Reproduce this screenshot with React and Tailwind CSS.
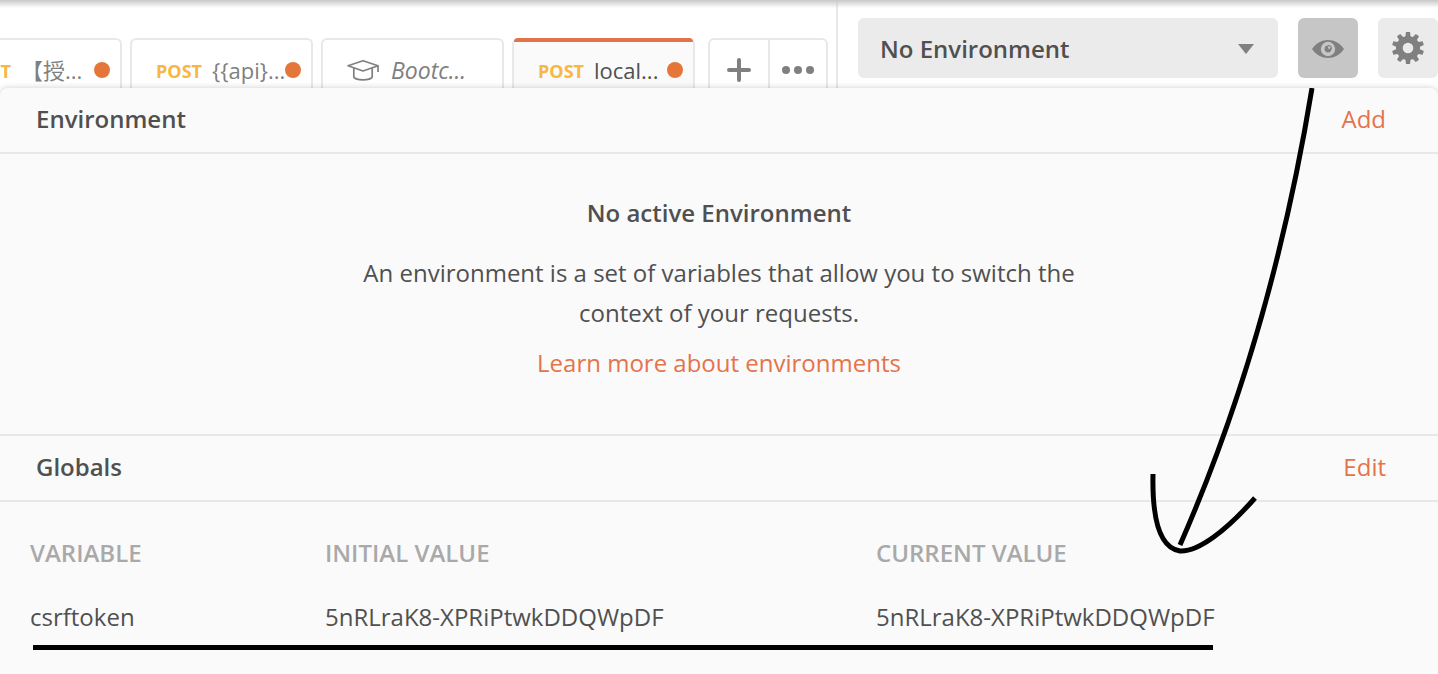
const tabs = [
  { method: 'POST', title: '【授...', dirty: true },
  { method: 'POST', title: '{{api}...', dirty: true },
  { title: 'Bootc...', lesson: true },
  { method: 'POST', title: 'local...', dirty: true, active: true },
];

const variables = [
  {
    name: 'csrftoken',
    initial: '5nRLraK8-XPRiPtwkDDQWpDF',
    current: '5nRLraK8-XPRiPtwkDDQWpDF',
  },
];

function LessonIcon() {
  return (
    <svg
      className="h-6 w-8 shrink-0"
      viewBox="0 0 32 24"
      fill="none"
      stroke="#808080"
      strokeWidth="1.7"
      strokeLinejoin="round"
      aria-hidden="true"
    >
      <path d="M1 7.7 L16 2.7 L31 7.7 L16 13 Z" />
      <path d="M6.8 9.8 V19 C9 22.7 23 22.7 25.2 19 V9.8" />
      <path d="M31 7.7 V14" />
    </svg>
  );
}

function EyeIcon() {
  return (
    <svg className="h-8 w-8" viewBox="0 0 32 32" aria-hidden="true">
      <path d="M0 17 C8 5 24 5 32 17 C24 29 8 29 0 17 Z" fill="#808080" />
      <circle cx="16" cy="17" r="7.2" fill="#c6c6c6" />
      <circle cx="16" cy="17" r="3.4" fill="#808080" />
      <path d="M16 17 V13 A4 4 0 0 1 20 17 Z" fill="#808080" />
      <circle cx="17.2" cy="15.6" r="1.3" fill="#c6c6c6" />
    </svg>
  );
}

function GearIcon() {
  const teeth = [0, 36, 72, 108, 144, 180, 216, 252, 288, 324];
  return (
    <svg className="h-8 w-8" viewBox="0 0 32 32" fill="#808080" aria-hidden="true">
      {teeth.map((angle) => (
        <path key={angle} d="M13.2 6 L14 0 H18 L18.8 6 Z" transform={`rotate(${angle} 16 16)`} />
      ))}
      <path
        fillRule="evenodd"
        d="M16 4 A12 12 0 1 1 16 28 A12 12 0 1 1 16 4 Z M16 10.7 A5.3 5.3 0 1 0 16 21.3 A5.3 5.3 0 1 0 16 10.7 Z"
      />
    </svg>
  );
}

function Tab({ tab }) {
  return (
    <button
      type="button"
      className={`relative flex h-[50px] w-[183px] shrink-0 items-center rounded-t-md border-x-2 border-t-2 border-[#e8e8e8] pl-6 text-left ${
        tab.lesson ? 'pt-3' : 'pt-3.5'
      } ${tab.active ? 'bg-[#fafafa] text-[#505050]' : 'bg-white text-[#808080]'}`}
    >
      {tab.active && <span className="absolute inset-x-0 -top-0.5 h-1 rounded-t-sm bg-[#e0734a]" />}
      {tab.lesson ? (
        <LessonIcon />
      ) : (
        <span className="text-lg font-bold text-[#f7b740]">{tab.method}</span>
      )}
      <span className={`whitespace-nowrap ${tab.lesson ? 'ml-3 text-[23px] italic' : 'ml-2.5 text-[22px]'}`}>
        {tab.title}
      </span>
      {tab.dirty && <span className="absolute top-[22px] right-2.5 size-4 rounded-full bg-[#e57639]" />}
    </button>
  );
}

function TopBar() {
  return (
    <header className="relative flex h-[88px] bg-white">
      <div className="absolute inset-x-0 top-0 h-2 bg-linear-to-b from-[#c8c8c8] to-transparent" />
      <nav className="flex min-w-0 flex-1 items-end justify-end gap-[13px] overflow-hidden pr-2">
        <div className="flex gap-2">
          {tabs.map((tab) => (
            <Tab key={tab.title} tab={tab} />
          ))}
        </div>
        <div className="flex h-[50px] w-[120px] shrink-0 rounded-t-md border-x-2 border-t-2 border-[#e8e8e8]">
          <button type="button" aria-label="New tab" className="flex w-[60px] items-center justify-center border-r-2 border-[#e8e8e8] pt-3">
            <svg className="size-6" viewBox="0 0 24 24" stroke="#808080" strokeWidth="4" strokeLinecap="round" aria-hidden="true">
              <path d="M12 2 V22 M2 12 H22" />
            </svg>
          </button>
          <button type="button" aria-label="Tab options" className="flex flex-1 items-center justify-center pt-3">
            <svg className="h-2 w-8" viewBox="0 0 32 8" fill="#808080" aria-hidden="true">
              <circle cx="4" cy="4" r="4" />
              <circle cx="16" cy="4" r="4" />
              <circle cx="28" cy="4" r="4" />
            </svg>
          </button>
        </div>
      </nav>
      <div className="flex shrink-0 items-start gap-5 border-l-2 border-[#e8e8e8] pt-[18px] pl-5">
        <div className="relative">
          <select
            aria-label="Environment"
            className="h-[60px] w-[420px] appearance-none rounded-md bg-[#ebebeb] pt-0.5 pr-16 pl-[22px] text-2xl font-semibold text-[#505050]"
          >
            <option>No Environment</option>
          </select>
          <svg className="pointer-events-none absolute top-[26px] right-6 h-2.5 w-4" viewBox="0 0 16 10" fill="#808080" aria-hidden="true">
            <path d="M0 0 H16 L8 10 Z" />
          </svg>
        </div>
        <button type="button" aria-label="Environment quick look" className="flex size-[60px] items-center justify-center rounded-md bg-[#c6c6c6]">
          <EyeIcon />
        </button>
        <button type="button" aria-label="Manage environments" className="flex size-[60px] items-center justify-center rounded-md bg-[#ebebeb]">
          <GearIcon />
        </button>
      </div>
    </header>
  );
}

function SectionHeader({ title, action }) {
  return (
    <div className="flex h-[66px] items-center justify-between border-b-2 border-[#e8e8e8] pr-[52px] pb-0.5 pl-9">
      <h2 className="font-semibold">{title}</h2>
      <a href="#" className="text-[#e5734a]">{action}</a>
    </div>
  );
}

function Annotation() {
  return (
    <svg
      className="pointer-events-none absolute top-0 right-0 h-[586px] w-[1438px]"
      viewBox="0 88 1438 586"
      fill="none"
      stroke="#000"
      strokeWidth="5"
      aria-hidden="true"
    >
      <path d="M1312 88 C1288 235 1248 390 1180 545" />
      <path d="M1153 474 C1152 520 1160 548 1180 551 C1198 552 1226 531 1255 498" />
      <path d="M33 647.5 H1213" />
    </svg>
  );
}

export default function App() {
  return (
    <div className="flex min-h-screen flex-col overflow-hidden bg-white font-['Open_Sans','Noto_Sans_CJK_TC',sans-serif] text-2xl text-[#505050]">
      <TopBar />
      <main className="relative flex-1 rounded-t-lg bg-[#fafafa] shadow-[0_0_6px_rgba(0,0,0,0.2)]">
        <section>
          <SectionHeader title="Environment" action="Add" />
          <div className="flex flex-col items-center border-b-2 border-[#e8e8e8] px-9 pt-[39px] pb-[51px] text-center leading-10">
            <h3 className="font-semibold">No active Environment</h3>
            <p className="mt-5 max-w-[720px]">
              An environment is a set of variables that allow you to switch the context of your requests.
            </p>
            <a href="#" className="mt-2.5 text-[#e5734a]">Learn more about environments</a>
          </div>
        </section>
        <section>
          <SectionHeader title="Globals" action="Edit" />
          <div className="pt-[19px] pl-[30px]">
            <table className="w-full table-fixed text-left">
              <thead>
                <tr className="h-16 text-[#a9a9a9]">
                  <th className="w-[295px] font-semibold">VARIABLE</th>
                  <th className="w-[551px] font-semibold">INITIAL VALUE</th>
                  <th className="font-semibold">CURRENT VALUE</th>
                </tr>
              </thead>
              <tbody>
                {variables.map((v) => (
                  <tr key={v.name} className="h-16">
                    <td>{v.name}</td>
                    <td>{v.initial}</td>
                    <td>{v.current}</td>
                  </tr>
                ))}
              </tbody>
            </table>
          </div>
        </section>
        <Annotation />
      </main>
    </div>
  );
}
